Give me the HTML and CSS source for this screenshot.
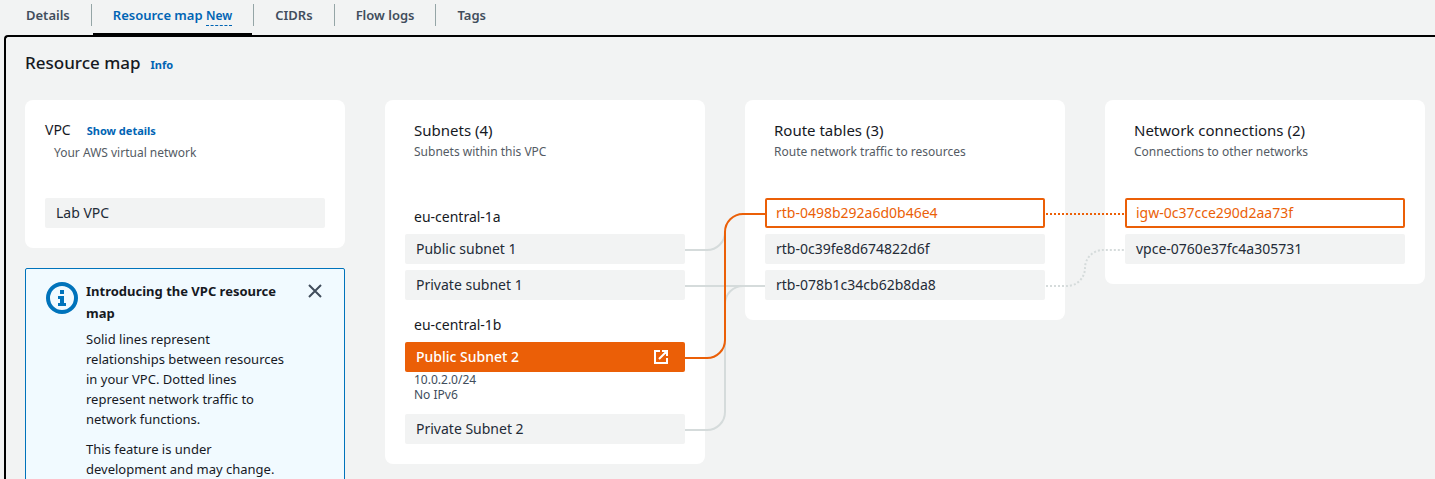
FILE: index.html
```html
<!DOCTYPE html>
<html lang="en">
<head>
<meta charset="utf-8">
<title>VPC resource map</title>
<link rel="stylesheet" href="styles.css">
</head>
<body>
<div class="page">
  <nav class="tabs">
    <a class="tab" href="#details">Details</a>
    <a class="tab tab-active" href="#map">Resource map <span class="new">New</span></a>
    <a class="tab" href="#cidrs">CIDRs</a>
    <a class="tab" href="#flow">Flow logs</a>
    <a class="tab" href="#tags">Tags</a>
  </nav>
  <main class="panel">
    <header class="panel-head">
      <h1>Resource map</h1>
      <a class="link" href="#info">Info</a>
    </header>
    <div class="map">
      <div class="stack">
        <section class="card">
          <div class="card-head">
            <div class="vpc-title"><h2>VPC</h2><a class="link" href="#show">Show details</a></div>
            <p class="sub">Your AWS virtual network</p>
          </div>
          <button class="node" type="button">Lab VPC</button>
        </section>
        <aside class="notice">
          <svg class="info-icon" viewBox="0 0 32 32" aria-hidden="true">
            <circle cx="16" cy="16" r="14" fill="none" stroke="#0073bb" stroke-width="4"/>
            <path fill="#0073bb" d="M14 8h4v4h-4zM12 14h6v7h2v3h-8v-3h2v-4h-2z"/>
          </svg>
          <div class="notice-text">
            <h3>Introducing the VPC resource map</h3>
            <p>Solid lines represent relationships between resources in your VPC. Dotted lines represent network traffic to network functions.</p>
            <p>This feature is under development and may change.</p>
          </div>
          <button class="close" type="button" aria-label="Dismiss">
            <svg viewBox="0 0 16 16"><path d="M2 2l12 12M14 2L2 14" fill="none" stroke="#414d5c" stroke-width="2"/></svg>
          </button>
        </aside>
      </div>

      <section class="card">
        <div class="card-head inset">
          <h2 class="large">Subnets (4)</h2>
          <p class="sub">Subnets within this VPC</p>
        </div>
        <h3 class="zone">eu-central-1a</h3>
        <div class="nodes">
          <button class="node" type="button">Public subnet 1</button>
          <button class="node" type="button">Private subnet 1</button>
        </div>
        <h3 class="zone zone-next">eu-central-1b</h3>
        <div class="nodes">
          <button class="node node-selected" type="button">Public Subnet 2
            <svg class="open-icon" viewBox="0 0 16 16" aria-hidden="true"><path d="M7 2H2v12h12V9M9 2h5v5M14 2L6 10" fill="none" stroke="#fff" stroke-width="2"/></svg>
          </button>
          <p class="node-info">10.0.2.0/24<br>No IPv6</p>
          <button class="node" type="button">Private Subnet 2</button>
        </div>
        <svg class="wires" width="80" height="364" viewBox="0 0 80 364" aria-hidden="true">
          <g class="wire">
            <path d="M0 150H22A18 18 0 0 0 40 132"/>
            <path d="M0 186H80"/>
            <path d="M0 330H22A18 18 0 0 0 40 312V204A18 18 0 0 1 58 186"/>
          </g>
          <path class="wire wire-on" d="M0 258H22A18 18 0 0 0 40 240V132A18 18 0 0 1 58 114H80"/>
        </svg>
      </section>

      <section class="card">
        <div class="card-head inset">
          <h2 class="large">Route tables (3)</h2>
          <p class="sub">Route network traffic to resources</p>
        </div>
        <div class="nodes">
          <button class="node node-linked" type="button">rtb-0498b292a6d0b46e4</button>
          <button class="node" type="button">rtb-0c39fe8d674822d6f</button>
          <button class="node" type="button">rtb-078b1c34cb62b8da8</button>
        </div>
        <svg class="wires" width="80" height="220" viewBox="0 0 80 220" aria-hidden="true">
          <path class="wire dotted" d="M1 186H22A18 18 0 0 0 40 168A18 18 0 0 1 58 150H80"/>
          <path class="wire wire-on dotted" d="M1 114H80"/>
        </svg>
      </section>

      <section class="card">
        <div class="card-head inset">
          <h2 class="large">Network connections (2)</h2>
          <p class="sub">Connections to other networks</p>
        </div>
        <div class="nodes">
          <button class="node node-linked" type="button">igw-0c37cce290d2aa73f</button>
          <button class="node" type="button">vpce-0760e37fc4a305731</button>
        </div>
      </section>
    </div>
  </main>
</div>
</body>
</html>
```
FILE: styles.css
```css
* { box-sizing: border-box; }
body {
  margin: 0;
  background: #f2f3f3;
  color: #16191f;
  font: 13px/20px "Noto Sans", "Open Sans", sans-serif;
}
h1, h2, h3, p { margin: 0; font-weight: 400; }
a { text-decoration: none; }
button { font: inherit; color: inherit; border: 0; cursor: pointer; }
svg { display: block; }

.page { display: flex; flex-direction: column; height: 100vh; overflow: hidden; }

.tabs { display: flex; flex: none; height: 35px; padding-left: 6px; }
.tab {
  position: relative;
  padding: 5px 20px 0;
  margin-right: 3px;
  color: #414d5c;
  font-weight: 600;
}
.tab:not(:last-child)::after {
  content: "";
  position: absolute;
  top: 4px;
  right: -2px;
  width: 1px;
  height: 22px;
  background: #95a5a6;
}
.tab-active { color: #0064b4; border-bottom: 2px solid #000; }
.new { display: inline-block; font-size: 12px; line-height: 18px; border-bottom: 1px dashed #0064b4; }

.panel {
  flex: 1 0 auto;
  margin-left: 4px;
  padding: 15px 10px 20px 19px;
  border: 2px solid #000;
  border-right: 0;
  border-radius: 4px 0 0 0;
}
.panel-head { display: flex; align-items: baseline; gap: 10px; height: 48px; }
h1 { font-size: 17px; line-height: 22px; font-weight: 500; }
.link { color: #0064b4; font-size: 11px; font-weight: 700; }

.map { display: grid; grid-template-columns: repeat(4, minmax(0, 1fr)); align-items: start; gap: 40px; }
.stack { display: grid; gap: 20px; }
.card { position: relative; padding: 20px; background: #fff; border-radius: 8px; }
.card-head { height: 78px; }
.card-head h2 { font-size: 14px; line-height: 20px; }
.card-head h2.large { font-size: 15px; }
.inset { padding-left: 9px; }
.sub { margin-top: 4px; color: #545b64; font-size: 12px; line-height: 16px; }
.vpc-title { display: flex; align-items: baseline; gap: 16px; }
.vpc-title + .sub { padding-left: 9px; }

.nodes { display: grid; gap: 6px; }
.node {
  display: flex;
  align-items: center;
  justify-content: space-between;
  width: 100%;
  height: 30px;
  padding: 0 11px;
  background: #f2f3f3;
  border-radius: 2px;
  color: #232b37;
  font-size: 14px;
  text-align: left;
}
.node-linked { padding: 0 9px; background: #fff; border: 2px solid #eb5f07; color: #eb5f07; }
.node-selected { padding-right: 16px; background: #eb5f07; color: #fff; font-weight: 500; }
.open-icon { width: 16px; height: 16px; }
.zone { height: 36px; padding: 9px 9px 0; font-size: 14px; line-height: 20px; }
.zone-next { margin-top: 6px; }
.node-info { margin-top: -6px; height: 36px; padding: 0 9px; color: #414d5c; font-size: 12px; line-height: 15px; }

.wires { position: absolute; top: 0; right: -60px; z-index: 1; pointer-events: none; }
.wire { fill: none; stroke: #d5dbdb; stroke-width: 2; }
.wire-on { stroke: #eb5f07; }
.dotted { stroke-dasharray: 2 2; }

.notice {
  display: flex;
  align-items: flex-start;
  gap: 8px;
  padding: 11px 21px 20px 20px;
  background: #f1faff;
  border: 1px solid #0073bb;
  border-radius: 2px;
}
.info-icon { flex: none; width: 32px; height: 32px; margin-top: 2px; }
.notice-text { flex: 1; padding-right: 9px; }
.notice-text h3 { font-size: 13px; line-height: 22px; font-weight: 700; }
.notice-text p { margin-top: 5px; }
.notice-text p + p { margin-top: 10px; }
.close { flex: none; padding: 3px 0; background: none; }
.close svg { width: 16px; height: 16px; }
```
